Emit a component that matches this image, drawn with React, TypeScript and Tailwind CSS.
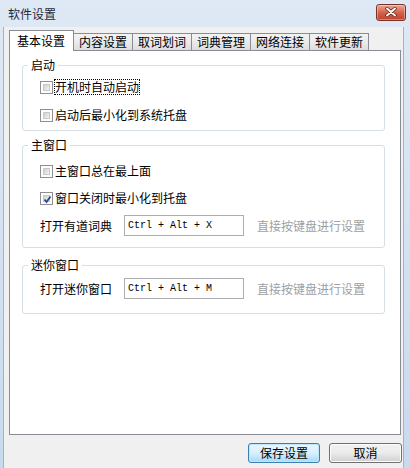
import type { ReactNode } from "react";

const cjk = { fontFamily: "'Noto Sans CJK SC', 'Noto Sans', sans-serif" };
const mono = { fontFamily: "'Liberation Mono', 'DejaVu Sans Mono', monospace" };

function Checkbox({ checked }: { checked?: boolean }) {
  return (
    <span className="w-[13px] h-[13px] border border-[#8f8f8f] bg-white p-[2px] shrink-0">
      <span className="block w-full h-full border border-[#c9c9c9] bg-gradient-to-br from-[#cfcfcf] to-[#f4f4f4] relative">
        {checked && (
          <svg viewBox="0 0 9 9" className="absolute -left-[1px] -top-[1px] w-[9px] h-[9px]">
            <path d="M1.5 4.5 L3.5 7 L7.5 1.5" fill="none" stroke="#2a4a8a" strokeWidth="1.8" />
          </svg>
        )}
      </span>
    </span>
  );
}

function CheckRow({ label, checked, focused }: { label: string; checked?: boolean; focused?: boolean }) {
  return (
    <div className="h-[20px] flex items-center pl-[17px]">
      <Checkbox checked={checked} />
      <span className={`ml-[2px] leading-[14px] ${focused ? "outline-1 outline-dotted outline-black" : ""}`}>{label}</span>
    </div>
  );
}

function KeyRow({ label, keys }: { label: string; keys: string }) {
  return (
    <div className="h-[21px] flex items-center pl-[17px]">
      <span className="w-[84px]">{label}</span>
      <div className="w-[120px] h-[21px] border border-[#abadb3] bg-white flex items-center pl-[3px] text-[10px] text-black" style={mono}>
        {keys}
      </div>
      <span className="ml-[13px] text-[#a0a0a0]">直接按键盘进行设置</span>
    </div>
  );
}

function Group({ title, className, children }: { title: string; className: string; children: ReactNode }) {
  return (
    <div className={`relative w-[363px] border border-[#d5dfe5] rounded-[3px] flex flex-col gap-[7px] ${className}`}>
      <span className="absolute -top-[9px] left-[5px] bg-white px-[3px] leading-[16px]">{title}</span>
      {children}
    </div>
  );
}

const tabs = ["内容设置", "取词划词", "词典管理", "网络连接", "软件更新"];

export default function App() {
  return (
    <div className="w-[410px] h-[468px] bg-gradient-to-b from-[#dfe9f5] to-[#c8daef] flex flex-col text-[12px] text-black" style={cjk}>
      {/* title bar */}
      <div className="h-[27px] flex items-center pl-[8px] pr-[4px] shrink-0">
        <span className="text-[12px] text-[#1e2a3a]">软件设置</span>
        <button className="ml-auto mb-[3px] w-[30px] h-[17px] rounded-[3px] border border-[#7b3226] bg-gradient-to-b from-[#e9a898] via-[#d4634c] to-[#c0402a] flex items-center justify-center shadow-[inset_0_0_0_1px_rgba(255,255,255,0.35)]">
          <svg viewBox="0 0 12 10" className="w-[12px] h-[10px]">
            <path d="M2 1.5 L10 8.5 M10 1.5 L2 8.5" stroke="#5a1a10" strokeWidth="3.4" strokeLinecap="round" />
            <path d="M2 1.5 L10 8.5 M10 1.5 L2 8.5" stroke="#ffffff" strokeWidth="2" strokeLinecap="round" />
          </svg>
        </button>
      </div>

      {/* client area */}
      <div className="flex-1 ml-[3px] mr-[6px] border-l border-r border-[#9bb5d6] bg-[#f0f0f0] pl-[5px] pt-[3px]">
        <div className="w-[394px] flex flex-col">
          {/* tabs */}
          <div className="flex items-end h-[20px]">
            <div className="relative z-10 w-[65px] h-[21px] -mb-[1px] border border-b-0 border-[#898c95] bg-white pl-[7px] flex items-center">
              基本设置
            </div>
            {tabs.map((t) => (
              <div
                key={t}
                className="w-[59px] h-[17px] border border-l-0 border-b-0 border-[#898c95] bg-gradient-to-b from-[#f3f3f3] via-[#ebebeb] to-[#dddddd] flex items-center justify-center"
              >
                {t}
              </div>
            ))}
          </div>

          {/* panel */}
          <div className="w-[392px] h-[385px] border border-[#898c95] bg-white pl-[12px] flex flex-col">
            <Group title="启动" className="mt-[14px] h-[66px] pt-[11px] gap-[8px]">
              <CheckRow label="开机时自动启动" focused />
              <CheckRow label="启动后最小化到系统托盘" />
            </Group>
            <Group title="主窗口" className="mt-[14px] h-[103px] pt-[15px]">
              <CheckRow label="主窗口总在最上面" />
              <CheckRow label="窗口关闭时最小化到托盘" checked />
              <KeyRow label="打开有道词典" keys="Ctrl + Alt + X" />
            </Group>
            <Group title="迷你窗口" className="mt-[17px] h-[49px] pt-[12px]">
              <KeyRow label="打开迷你窗口" keys="Ctrl + Alt + M" />
            </Group>
          </div>

          {/* buttons */}
          <div className="flex justify-end gap-[9px] mt-[8px] pr-[1px]">
            <button className="w-[72px] h-[20px] rounded-[3px] border border-[#3c7fb1] bg-gradient-to-b from-[#eaf6fd] via-[#d9f0fc] to-[#a7d9f5] shadow-[inset_0_0_0_1px_#bfe6fb] leading-none">
              保存设置
            </button>
            <button className="w-[73px] h-[20px] rounded-[3px] border border-[#707070] bg-gradient-to-b from-[#f2f2f2] via-[#ebebeb] to-[#cfcfcf] shadow-[inset_0_0_0_1px_#fcfcfc] leading-none">
              取消
            </button>
          </div>
        </div>
      </div>
    </div>
  );
}
